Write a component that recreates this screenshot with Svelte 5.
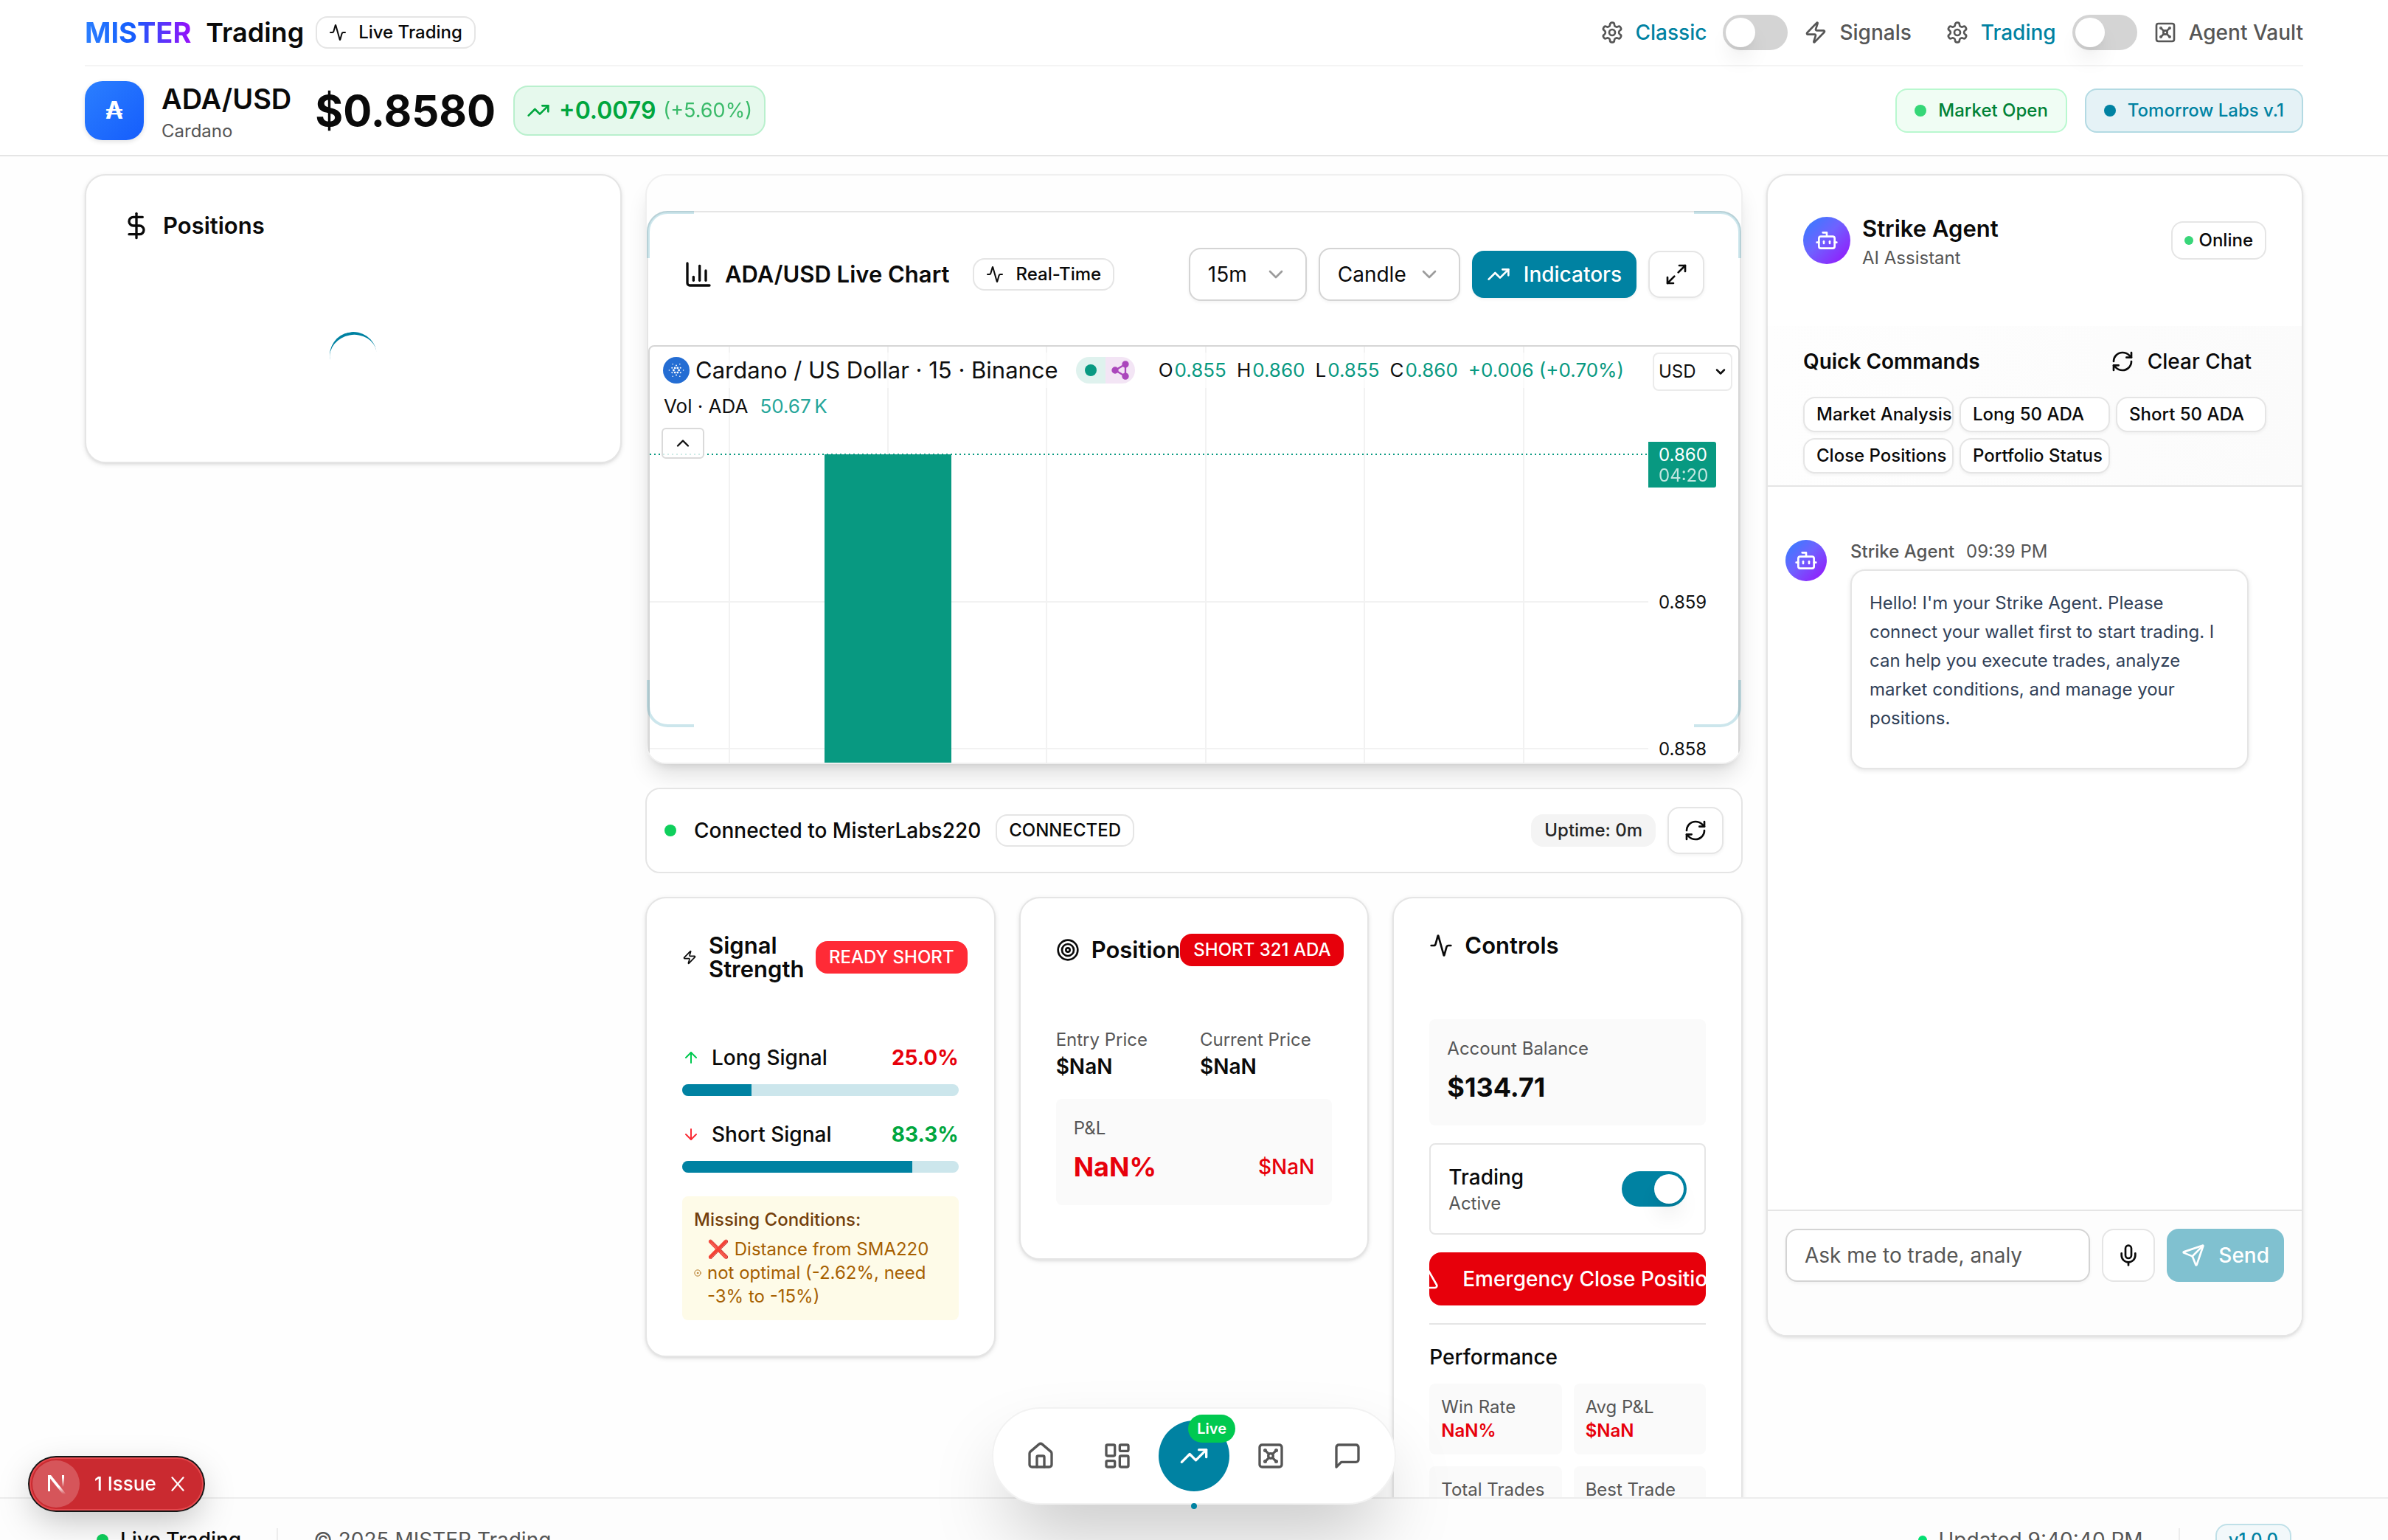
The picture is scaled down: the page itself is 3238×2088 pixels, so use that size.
<script>
  const icons = {
    activity: '<path d="M22 12h-2.48a2 2 0 0 0-1.93 1.46l-2.35 8.36a.25.25 0 0 1-.48 0L9.24 2.18a.25.25 0 0 0-.48 0l-2.35 8.36A2 2 0 0 1 4.49 12H2"/>',
    settings: '<path d="M12.22 2h-.44a2 2 0 0 0-2 2v.18a2 2 0 0 1-1 1.73l-.43.25a2 2 0 0 1-2 0l-.15-.08a2 2 0 0 0-2.73.73l-.22.38a2 2 0 0 0 .73 2.73l.15.1a2 2 0 0 1 1 1.72v.51a2 2 0 0 1-1 1.74l-.15.09a2 2 0 0 0-.73 2.73l.22.38a2 2 0 0 0 2.73.73l.15-.08a2 2 0 0 1 2 0l.43.25a2 2 0 0 1 1 1.73V20a2 2 0 0 0 2 2h.44a2 2 0 0 0 2-2v-.18a2 2 0 0 1 1-1.73l.43-.25a2 2 0 0 1 2 0l.15.08a2 2 0 0 0 2.73-.73l.22-.39a2 2 0 0 0-.73-2.73l-.15-.08a2 2 0 0 1-1-1.74v-.5a2 2 0 0 1 1-1.74l.15-.09a2 2 0 0 0 .73-2.73l-.22-.38a2 2 0 0 0-2.73-.73l-.15.08a2 2 0 0 1-2 0l-.43-.25a2 2 0 0 1-1-1.73V4a2 2 0 0 0-2-2z"/><circle cx="12" cy="12" r="3"/>',
    zap: '<path d="M4 14a1 1 0 0 1-.78-1.63l9.9-10.2a.5.5 0 0 1 .86.46l-1.92 6.02A1 1 0 0 0 13 10h7a1 1 0 0 1 .78 1.63l-9.9 10.2a.5.5 0 0 1-.86-.46l1.92-6.02A1 1 0 0 0 11 14z"/>',
    vault: '<rect width="18" height="18" x="3" y="3" rx="2"/><circle cx="7.5" cy="7.5" r=".5" fill="currentColor"/><path d="m7.9 7.9 2.7 2.7"/><circle cx="16.5" cy="7.5" r=".5" fill="currentColor"/><path d="m13.4 10.6 2.7-2.7"/><circle cx="7.5" cy="16.5" r=".5" fill="currentColor"/><path d="m7.9 16.1 2.7-2.7"/><circle cx="16.5" cy="16.5" r=".5" fill="currentColor"/><path d="m13.4 13.4 2.7 2.7"/><circle cx="12" cy="12" r="2"/>',
    trend: '<path d="M16 7h6v6"/><path d="m22 7-8.5 8.5-5-5L2 17"/>',
    dollar: '<path d="M12 2v20"/><path d="M17 5H9.5a3.5 3.5 0 0 0 0 7h5a3.5 3.5 0 0 1 0 7H6"/>',
    chart: '<path d="M3 3v16a2 2 0 0 0 2 2h16"/><path d="M18 17V9"/><path d="M13 17V5"/><path d="M8 17v-3"/>',
    down: '<path d="m6 9 6 6 6-6"/>',
    up: '<path d="m6 15 6-6 6 6"/>',
    expand: '<path d="M15 3h6v6"/><path d="m21 3-7 7"/><path d="m3 21 7-7"/><path d="M9 21H3v-6"/>',
    refresh: '<path d="M3 12a9 9 0 0 1 9-9 9.75 9.75 0 0 1 6.74 2.74L21 8"/><path d="M21 3v5h-5"/><path d="M21 12a9 9 0 0 1-9 9 9.75 9.75 0 0 1-6.74-2.74L3 16"/><path d="M8 16H3v5"/>',
    arrowUp: '<path d="m5 12 7-7 7 7"/><path d="M12 19V5"/>',
    arrowDown: '<path d="M12 5v14"/><path d="m19 12-7 7-7-7"/>',
    target: '<circle cx="12" cy="12" r="10"/><circle cx="12" cy="12" r="6"/><circle cx="12" cy="12" r="2"/>',
    ring: '<circle cx="12" cy="12" r="10"/><circle cx="12" cy="12" r="2"/>',
    alert: '<path d="m21.73 18-8-14a2 2 0 0 0-3.48 0l-8 14A2 2 0 0 0 4 21h16a2 2 0 0 0 1.73-3"/><path d="M12 9v4"/><path d="M12 17h.01"/>',
    bot: '<path d="M12 8V4H8"/><rect width="16" height="12" x="4" y="8" rx="2"/><path d="M2 14h2"/><path d="M20 14h2"/><path d="M15 13v2"/><path d="M9 13v2"/>',
    mic: '<path d="M12 19v3"/><path d="M19 10v2a7 7 0 0 1-14 0v-2"/><rect x="9" y="2" width="6" height="13" rx="3"/>',
    send: '<path d="M14.54 21.69a.5.5 0 0 0 .94-.03l6.5-19a.5.5 0 0 0-.64-.63l-19 6.5a.5.5 0 0 0-.02.94l7.93 3.18a2 2 0 0 1 1.11 1.11z"/><path d="m21.85 2.15-10.94 10.94"/>',
    home: '<path d="M15 21v-8a1 1 0 0 0-1-1h-4a1 1 0 0 0-1 1v8"/><path d="M3 10a2 2 0 0 1 .71-1.53l7-6a2 2 0 0 1 2.58 0l7 6A2 2 0 0 1 21 10v9a2 2 0 0 1-2 2H5a2 2 0 0 1-2-2z"/>',
    grid: '<rect width="7" height="9" x="3" y="3" rx="1"/><rect width="7" height="5" x="14" y="3" rx="1"/><rect width="7" height="9" x="14" y="12" rx="1"/><rect width="7" height="5" x="3" y="16" rx="1"/>',
    message: '<path d="M21 15a2 2 0 0 1-2 2H7l-4 4V5a2 2 0 0 1 2-2h14a2 2 0 0 1 2 2z"/>',
    close: '<path d="M5 4l14 16"/><path d="M19 4L5 20"/>',
    share: '<path d="M6 12 18 5v14z" fill="none"/><circle cx="6" cy="12" r="3" fill="currentColor"/><circle cx="18" cy="5" r="3" fill="currentColor"/><circle cx="18" cy="19" r="3" fill="currentColor"/>'
  };

  const commands = ['Market Analysis', 'Long 50 ADA', 'Short 50 ADA', 'Close Positions', 'Portfolio Status'];
  const signals = [
    { name: 'Long Signal', icon: 'arrowUp', iconTone: 'lime', value: 25.0, tone: 'red' },
    { name: 'Short Signal', icon: 'arrowDown', iconTone: 'rose', value: 83.3, tone: 'green' }
  ];
  const stats = [
    { label: 'Win Rate', value: 'NaN%' },
    { label: 'Avg P&L', value: '$NaN' },
    { label: 'Total Trades', value: '0' },
    { label: 'Best Trade', value: '$NaN' }
  ];
  const ohlc = [['O', '0.855'], ['H', '0.860'], ['L', '0.855'], ['C', '0.860']];
  const gridX = [108, 323, 538, 754, 969, 1185];
  const gridY = [346, 545];
  const ringDots = [0, 60, 120, 180, 240, 300].map((a) => (a * Math.PI) / 180);
  const year = 2025;
</script>

{#snippet icon(name, size)}
  <svg class="icon" width={size} height={size} viewBox="0 0 24 24" aria-hidden="true">{@html icons[name]}</svg>
{/snippet}

<div class="page">
  <header class="top">
    <div class="wrap">
      <div class="bar">
        <div class="brand">
          <span class="mister">MISTER</span>
          <span class="word">Trading</span>
          <span class="badge">{@render icon('activity', 24)}Live Trading</span>
        </div>
        <div class="modes">
          <label class="mode" for="mode-signals">{@render icon('settings', 32)}<b>Classic</b></label>
          <input id="mode-signals" class="switch" type="checkbox" role="switch" />
          <label class="mode" for="mode-signals">{@render icon('zap', 32)}Signals</label>
          <label class="mode second" for="mode-vault">{@render icon('settings', 32)}<b>Trading</b></label>
          <input id="mode-vault" class="switch" type="checkbox" role="switch" />
          <label class="mode" for="mode-vault">{@render icon('vault', 32)}Agent Vault</label>
        </div>
      </div>
      <div class="ticker">
        <div class="coin">₳</div>
        <div class="pair">
          <h1>ADA/USD</h1>
          <p>Cardano</p>
        </div>
        <div class="price">$0.8580</div>
        <div class="change">{@render icon('trend', 32)}<strong>+0.0079</strong><span>(+5.60%)</span></div>
        <div class="states">
          <span class="state open"><i></i>Market Open</span>
          <span class="state labs"><i></i>Tomorrow Labs v.1</span>
        </div>
      </div>
    </div>
  </header>

  <main>
    <div class="wrap columns">
      <section class="card positions">
        <h2>{@render icon('dollar', 40)}Positions</h2>
        <div class="loading"><div class="spinner"></div></div>
      </section>

      <div class="center">
        <section class="chart-shell">
          <div class="chart-card">
            <div class="chart-head">
              <h2>{@render icon('chart', 40)}ADA/USD Live Chart</h2>
              <span class="badge">{@render icon('activity', 24)}Real-Time</span>
              <div class="tools">
                <div class="pick short">
                  <select aria-label="Interval"><option>15m</option></select>
                  {@render icon('down', 32)}
                </div>
                <div class="pick">
                  <select aria-label="Chart type"><option>Candles</option></select>
                  {@render icon('down', 32)}
                </div>
                <button class="btn primary">{@render icon('trend', 32)}Indicators</button>
                <button class="btn" aria-label="Fullscreen">{@render icon('expand', 32)}</button>
              </div>
            </div>
            <div class="plot">
              <svg class="canvas" aria-hidden="true">
                {#each gridX as x}<line x1={x} x2={x} y1="0" y2="564" />{/each}
                {#each gridY as y}<line x1="0" x2="100%" y1={y} y2={y} />{/each}
                <rect x="237" y="146" width="172" height="420" fill="#089981" />
                <line class="last" x1="0" x2="100%" y1="146" y2="146" />
              </svg>
              <svg class="axis">
                <text x="14" y="355">0.859</text>
                <text x="14" y="554">0.858</text>
                <path d="M0 129h89a3 3 0 0 1 3 3v56a3 3 0 0 1-3 3H0z" fill="#089981" />
                <text class="now" x="14" y="155">0.860</text>
                <text class="now count" x="14" y="183">04:20</text>
              </svg>
              <div class="legend">
                <div class="symbol">
                  <svg class="ada" width="36" height="36" viewBox="0 0 36 36" aria-hidden="true">
                    <circle cx="18" cy="18" r="18" fill="#246dd3" />
                    <g fill="#fff">
                      {#each ringDots as a}
                        <circle cx={18 + 3.6 * Math.cos(a)} cy={18 + 3.6 * Math.sin(a)} r="1.4" />
                        <circle cx={18 + 6.6 * Math.cos(a + 0.52)} cy={18 + 6.6 * Math.sin(a + 0.52)} r="1" />
                        <circle cx={18 + 9.6 * Math.cos(a)} cy={18 + 9.6 * Math.sin(a)} r="0.8" />
                      {/each}
                    </g>
                  </svg>
                  <span class="name">Cardano / US Dollar · 15 · Binance</span>
                  <span class="pill"><span class="live"><i></i></span><span class="net">{@render icon('share', 28)}</span></span>
                  <span class="ohlc">
                    {#each ohlc as [k, v]}<span>{k}<em>{v}</em></span>{/each}
                    <em>+0.006 (+0.70%)</em>
                  </span>
                </div>
                <div class="volume">Vol · ADA <em>50.67&#8201;K</em></div>
                <button class="fold" aria-label="Hide legend">{@render icon('up', 28)}</button>
              </div>
              <div class="currency">
                <select aria-label="Currency"><option>USD</option></select>
                {@render icon('down', 20)}
              </div>
            </div>
            <div class="corners"><i class="tl"></i><i class="tr"></i><i class="bl"></i><i class="br"></i></div>
          </div>
        </section>

        <section class="status">
          <i class="dot"></i>
          <span class="host">Connected to MisterLabs220</span>
          <span class="badge">CONNECTED</span>
          <span class="badge soft">Uptime: 0m</span>
          <button class="btn" aria-label="Refresh">{@render icon('refresh', 32)}</button>
        </section>

        <div class="trio">
          <section class="card">
            <div class="card-head">
              <h2 class="narrow">{@render icon('zap', 20)}Signal Strength</h2>
              <span class="badge hot">READY SHORT</span>
            </div>
            {#each signals as s}
              <div class="signal">
                <div class="signal-row">
                  <span class="what"><span class={s.iconTone}>{@render icon(s.icon, 24)}</span>{s.name}</span>
                  <strong class={s.tone}>{s.value.toFixed(1)}%</strong>
                </div>
                <div class="meter"><div class="fill" style="width: {s.value}%"></div></div>
              </div>
            {/each}
            <div class="missing">
              <h3>Missing Conditions:</h3>
              <div class="reason">
                {@render icon('ring', 10)}
                <p><span class="cross">❌</span> Distance from SMA220 not optimal (-2.62%, need -3% to -15%)</p>
              </div>
            </div>
          </section>

          <section class="card">
            <div class="card-head">
              <h2>{@render icon('target', 32)}Position</h2>
              <span class="badge danger">SHORT 321 ADA</span>
            </div>
            <div class="pairs">
              <div><p class="label">Entry Price</p><p class="value">$NaN</p></div>
              <div><p class="label">Current Price</p><p class="value">$NaN</p></div>
            </div>
            <div class="box pnl">
              <p class="label">P&amp;L</p>
              <div class="pnl-row"><strong>NaN%</strong><span>$NaN</span></div>
            </div>
          </section>

          <section class="card">
            <div class="card-head">
              <h2>{@render icon('activity', 32)}Controls</h2>
            </div>
            <div class="controls">
              <div class="box">
                <p class="label">Account Balance</p>
                <p class="balance">$134.71</p>
              </div>
              <div class="toggle">
                <label for="trading">Trading<span>Active</span></label>
                <input id="trading" class="switch" type="checkbox" role="switch" checked />
              </div>
              <button class="emergency">{@render icon('alert', 32)}Emergency Close Position</button>
              <hr />
            </div>
            <h3 class="perf">Performance</h3>
            <div class="stats">
              {#each stats as s}
                <div class="stat"><p class="label">{s.label}</p><p class="bad">{s.value}</p></div>
              {/each}
            </div>
          </section>
        </div>
      </div>

      <section class="card agent">
        <div class="agent-head">
          <div class="avatar big">{@render icon('bot', 32)}</div>
          <div>
            <h2>Strike Agent</h2>
            <p class="label">AI Assistant</p>
          </div>
          <span class="badge online"><i></i>Online</span>
        </div>
        <div class="quick">
          <div class="quick-head">
            <h3>Quick Commands</h3>
            <button class="clear">{@render icon('refresh', 32)}Clear Chat</button>
          </div>
          <div class="commands">
            {#each commands as c}<button>{c}</button>{/each}
          </div>
        </div>
        <div class="log">
          <div class="avatar">{@render icon('bot', 32)}</div>
          <div class="message">
            <p class="who"><b>Strike Agent</b><time>09:39 PM</time></p>
            <p class="bubble">Hello! I'm your Strike Agent. Please connect your wallet first to start trading. I can help you execute trades, analyze market conditions, and manage your positions.</p>
          </div>
        </div>
        <form class="compose">
          <input type="text" aria-label="Message" placeholder="Ask me to trade, analy" />
          <button type="button" class="voice" aria-label="Voice input">{@render icon('mic', 32)}</button>
          <button type="button" class="send">{@render icon('send', 32)}Send</button>
        </form>
      </section>
    </div>
  </main>

  <footer>
    <div class="wrap foot">
      <i class="dot"></i>
      <span class="strong">Live Trading</span>
      <span class="rule"></span>
      <span>© {year} MISTER Trading</span>
      <i class="dot small"></i>
      <span>Updated 9:40:40 PM</span>
      <span class="rule"></span>
      <span class="badge version">v1.0.0</span>
    </div>
  </footer>

  <nav class="dock" aria-label="Main">
    <a href="#home" aria-label="Home">{@render icon('home', 40)}</a>
    <a href="#dashboard" aria-label="Dashboard">{@render icon('grid', 40)}</a>
    <a href="#trading" class="active" aria-label="Trading">{@render icon('trend', 40)}<span class="tag">Live</span><i></i></a>
    <a href="#vault" aria-label="Agent Vault">{@render icon('vault', 40)}</a>
    <a href="#chat" aria-label="Chat">{@render icon('message', 40)}</a>
  </nav>

  <div class="issue">
    <span class="mark">
      <svg width="28" height="28" viewBox="0 0 28 28" aria-hidden="true">
        <defs>
          <linearGradient id="fade-leg" gradientUnits="userSpaceOnUse" x1="0" y1="18" x2="0" y2="28"><stop offset="0" stop-color="#fff" /><stop offset="1" stop-color="#fff" stop-opacity="0" /></linearGradient>
          <linearGradient id="fade-stem" x1="0" y1="0" x2="0" y2="1"><stop offset="0.2" stop-color="#fff" /><stop offset="1" stop-color="#fff" stop-opacity="0" /></linearGradient>
        </defs>
        <rect x="3" y="2" width="3" height="22" fill="#fff" />
        <path d="M3 2h4l20 25-3 2L3 3z" fill="url(#fade-leg)" />
        <rect x="22" y="2" width="3" height="16" fill="url(#fade-stem)" />
      </svg>
    </span>
    <button class="open-issue">1 Issue</button>
    <button aria-label="Dismiss">{@render icon('close', 26)}</button>
  </div>
</div>

<style>
  :global(body) {
    margin: 0;
    background: #fefefe;
  }
  .page {
    --teal: #0082a2;
    --line: #e5e5e5;
    --ink: #0a0a0a;
    --muted: #565656;
    height: 100vh;
    display: flex;
    flex-direction: column;
    overflow: hidden;
    font: 400 28px/40px Inter, "Open Sans", sans-serif;
    color: var(--ink);
  }
  .page :where(*) {
    box-sizing: border-box;
  }
  h1, h2, h3, p {
    margin: 0;
  }
  button, select, input {
    font: inherit;
    color: inherit;
    margin: 0;
  }
  em, i {
    font-style: normal;
  }
  .icon {
    flex: none;
    display: block;
    fill: none;
    stroke: currentColor;
    stroke-width: 2;
    stroke-linecap: round;
    stroke-linejoin: round;
  }
  .wrap {
    width: 100%;
    max-width: 3072px;
    margin: 0 auto;
    padding: 0 32px;
  }
  .badge {
    display: inline-flex;
    align-items: center;
    gap: 16px;
    height: 44px;
    flex: none;
    padding: 0 16px;
    border: 2px solid var(--line);
    border-radius: 16px;
    font-size: 24px;
    font-weight: 500;
    line-height: 32px;
    white-space: nowrap;
    background: #fff;
  }
  .label {
    font-size: 24px;
    line-height: 32px;
    color: var(--muted);
  }

  /* header */
  .top {
    flex: none;
    background: #fff;
    border-bottom: 2px solid var(--line);
  }
  .bar {
    display: flex;
    align-items: center;
    justify-content: space-between;
    height: 90px;
    border-bottom: 2px solid #f4f4f4;
  }
  .brand {
    display: flex;
    align-items: center;
    gap: 16px;
    font-size: 36px;
  }
  .mister {
    font-size: 38px;
    font-weight: 700;
    margin-right: 4px;
    background: linear-gradient(90deg, #2b7fff, #155dfc 45%, #9810fa);
    background-clip: text;
    color: transparent;
  }
  .word {
    font-size: 36px;
    font-weight: 600;
  }
  .modes {
    display: flex;
    align-items: center;
    gap: 22px;
  }
  .mode {
    display: flex;
    align-items: center;
    gap: 16px;
    font-weight: 500;
    color: var(--muted);
  }
  .mode b {
    font-weight: 500;
    color: var(--teal);
  }
  .mode.second {
    margin-left: 24px;
  }
  .switch {
    appearance: none;
    flex: none;
    width: 88px;
    height: 48px;
    padding: 4px;
    border-radius: 24px;
    background: #d4d4d4;
  }
  .switch::before {
    content: "";
    display: block;
    width: 40px;
    height: 40px;
    border-radius: 50%;
    background: #fff;
    box-shadow: 0 20px 30px -6px rgba(0, 0, 0, 0.1), 0 8px 12px -8px rgba(0, 0, 0, 0.1);
  }
  .switch:checked {
    background: var(--teal);
  }
  .switch:checked::before {
    margin-left: auto;
  }
  .ticker {
    display: flex;
    align-items: center;
    height: 120px;
  }
  .coin {
    width: 80px;
    height: 80px;
    border-radius: 24px;
    display: grid;
    place-items: center;
    background: linear-gradient(135deg, #2b7fff, #155dfc);
    color: #fff;
    font-size: 32px;
    font-weight: 700;
    box-shadow: 0 2px 6px rgba(0, 0, 0, 0.12);
  }
  .pair {
    margin-left: 24px;
  }
  .pair h1 {
    font-size: 38px;
    font-weight: 600;
    line-height: 56px;
  }
  .pair p {
    font-size: 24px;
    line-height: 32px;
    color: var(--muted);
  }
  .price {
    margin-left: 32px;
    font-size: 58px;
    font-weight: 700;
    line-height: 72px;
  }
  .change {
    display: flex;
    align-items: center;
    margin-left: 24px;
    height: 68px;
    padding: 0 16px;
    border: 2px solid #b9f0cd;
    border-radius: 20px;
    background: #e6f9ed;
    color: #00a63e;
  }
  .change strong {
    margin: 0 10px 0 12px;
    font-size: 32px;
    font-weight: 600;
  }
  .change span {
    font-size: 27px;
    opacity: 0.75;
  }
  .states {
    display: flex;
    gap: 24px;
    margin-left: auto;
  }
  .state {
    display: flex;
    align-items: center;
    gap: 16px;
    height: 60px;
    padding: 0 24px;
    border: 2px solid #b9f8cf;
    border-radius: 16px;
    background: #f0fdf4;
    color: #008236;
    font-size: 24px;
    font-weight: 500;
  }
  .state i {
    width: 16px;
    height: 16px;
    border-radius: 50%;
    background: #35d777;
  }
  .state.labs {
    border-color: #b3dae3;
    background: #e5f2f6;
    color: var(--teal);
  }
  .state.labs i {
    background: var(--teal);
  }

  /* layout */
  main {
    flex: 1;
    min-height: 0;
    overflow: hidden;
    padding-top: 24px;
  }
  .columns {
    display: grid;
    grid-template-columns: repeat(12, minmax(0, 1fr));
    gap: 32px;
    align-items: start;
  }
  .card {
    border: 2px solid var(--line);
    border-radius: 28px;
    background: #fff;
    padding: 48px;
    box-shadow: 0 2px 6px rgba(0, 0, 0, 0.1), 0 2px 4px -2px rgba(0, 0, 0, 0.1);
  }
  h2 {
    display: flex;
    align-items: center;
    gap: 16px;
    font-size: 31px;
    font-weight: 600;
    line-height: 32px;
  }
  .positions {
    grid-column: span 3;
  }
  .loading {
    display: flex;
    justify-content: center;
    padding: 124px 0 64px;
  }
  .spinner {
    width: 64px;
    height: 64px;
    border-radius: 50%;
    border-bottom: 4px solid var(--teal);
    transform: rotate(170deg);
  }
  .center {
    grid-column: span 6;
    display: flex;
    flex-direction: column;
    gap: 32px;
  }

  /* chart */
  .chart-shell {
    height: 800px;
    border: 2px solid #f0f0f0;
    border-radius: 28px;
    padding-top: 48px;
    overflow: hidden;
    background: #fefefe;
    box-shadow: 0 20px 30px -6px rgba(0, 0, 0, 0.13), 0 8px 12px -8px rgba(0, 0, 0, 0.13);
  }
  .chart-card {
    position: relative;
    border: 2px solid var(--line);
    border-radius: 28px;
    background: #fff;
  }
  .chart-head {
    display: flex;
    align-items: center;
    padding: 48px 48px 60px;
  }
  .chart-head .badge {
    margin-left: 32px;
  }
  .tools {
    display: flex;
    align-items: center;
    gap: 16px;
    margin-left: auto;
  }
  .pick {
    position: relative;
    width: 192px;
  }
  .pick.short {
    width: 160px;
  }
  .pick select {
    appearance: none;
    display: block;
    width: 100%;
    height: 72px;
    padding: 0 72px 0 24px;
    border: 2px solid #d4d4d4;
    border-radius: 16px;
    background: #fff;
    box-shadow: 0 2px 4px rgba(0, 0, 0, 0.05);
  }
  .pick :global(.icon) {
    position: absolute;
    right: 26px;
    top: 20px;
    opacity: 0.4;
    pointer-events: none;
  }
  .btn {
    display: flex;
    align-items: center;
    gap: 18px;
    height: 64px;
    padding: 0 20px;
    border: 2px solid var(--line);
    border-radius: 16px;
    background: #fff;
    font-weight: 500;
    box-shadow: 0 2px 4px rgba(0, 0, 0, 0.05);
  }
  .btn.primary {
    border: 0;
    background: var(--teal);
    color: #fff;
  }
  .plot {
    position: relative;
    display: flex;
    height: 640px;
    border: 2px solid #d6d6d6;
    border-radius: 8px;
    color: #0f0f0f;
  }
  .canvas {
    flex: 1;
    min-width: 0;
    height: 100%;
  }
  .canvas line {
    stroke: #f2f2f2;
    stroke-width: 2;
  }
  .canvas .last {
    stroke: #089981;
    stroke-dasharray: 2 4;
  }
  .axis {
    flex: none;
    width: 122px;
    height: 100%;
    font-size: 24px;
    fill: #0f0f0f;
  }
  .axis .now {
    fill: #fff;
  }
  .axis .count {
    opacity: 0.75;
  }
  .legend {
    position: absolute;
    left: 16px;
    top: 8px;
    font-size: 26px;
  }
  .legend em {
    color: #089981;
  }
  .symbol {
    display: flex;
    align-items: center;
    height: 48px;
    white-space: nowrap;
    background: rgba(255, 255, 255, 0.6);
  }
  .ada {
    margin: 0 8px 0 2px;
  }
  .name {
    font-size: 31px;
  }
  .pill {
    display: flex;
    width: 80px;
    height: 36px;
    margin: 0 32px 0 24px;
    border-radius: 18px;
    overflow: hidden;
  }
  .pill span {
    flex: 1;
    display: grid;
    place-items: center;
  }
  .live {
    background: #dff2ee;
  }
  .live i {
    width: 16px;
    height: 16px;
    border-radius: 50%;
    background: #089981;
  }
  .net {
    background: #f3e5f5;
    color: #ab47bc;
  }
  .ohlc {
    display: flex;
    gap: 14px;
  }
  .ohlc span {
    display: flex;
    gap: 2px;
  }
  .volume {
    display: flex;
    gap: 16px;
    height: 50px;
    padding-left: 3px;
    align-items: center;
  }
  .volume em {
    color: #26a69a;
  }
  .fold {
    display: grid;
    place-items: center;
    width: 58px;
    height: 42px;
    margin-top: 4px;
    padding: 0;
    border: 2px solid #dadada;
    border-radius: 6px;
    background: rgba(255, 255, 255, 0.8);
  }
  .currency {
    position: absolute;
    right: 8px;
    top: 8px;
  }
  .currency select {
    appearance: none;
    display: block;
    width: 108px;
    height: 52px;
    padding: 0 6px;
    border: 2px solid #ebebeb;
    border-radius: 8px;
    background: #fff;
    font-size: 24px;
  }
  .currency :global(.icon) {
    position: absolute;
    right: 6px;
    top: 16px;
    stroke-width: 3;
    pointer-events: none;
  }
  .corners {
    position: absolute;
    inset: -2px -2px auto;
    height: 700px;
    pointer-events: none;
  }
  .corners i {
    position: absolute;
    width: 64px;
    height: 64px;
    border: 0 solid rgba(0, 130, 162, 0.2);
  }
  .corners .tl {
    left: 0;
    top: 0;
    border-width: 4px 0 0 4px;
    border-top-left-radius: 28px;
  }
  .corners .tr {
    right: 0;
    top: 0;
    border-width: 4px 4px 0 0;
    border-top-right-radius: 28px;
  }
  .corners .bl {
    left: 0;
    bottom: 0;
    border-width: 0 0 4px 4px;
    border-bottom-left-radius: 28px;
  }
  .corners .br {
    right: 0;
    bottom: 0;
    border-width: 0 4px 4px 0;
    border-bottom-right-radius: 28px;
  }

  /* connection */
  .status {
    display: flex;
    align-items: center;
    height: 116px;
    padding: 0 24px;
    border: 2px solid var(--line);
    border-radius: 20px;
    background: #fff;
  }
  .dot {
    flex: none;
    width: 16px;
    height: 16px;
    border-radius: 50%;
    background: #0fcf5c;
  }
  .host {
    margin: 0 20px 0 24px;
    font-weight: 500;
  }
  .soft {
    margin: 0 16px 0 auto;
    border-color: #f4f4f4;
    background: #f4f4f4;
    color: #262626;
  }

  /* detail cards */
  .trio {
    display: grid;
    grid-template-columns: repeat(3, minmax(0, 1fr));
    gap: 32px;
    align-items: start;
  }
  .card-head {
    display: flex;
    align-items: center;
    margin-bottom: 84px;
  }
  .card-head h2 {
    flex: none;
  }
  .card-head .narrow {
    width: 181px;
  }
  .hot {
    border-color: #ff2b36;
    background: #ff2b36;
    color: #fff;
  }
  .danger {
    border-color: #e7000b;
    background: #e7000b;
    color: #fff;
  }
  .signal {
    margin-bottom: 32px;
  }
  .signal-row {
    display: flex;
    justify-content: space-between;
    margin-bottom: 16px;
  }
  .what {
    display: flex;
    align-items: center;
    gap: 16px;
    font-weight: 500;
  }
  .lime {
    color: #00c950;
  }
  .rose {
    color: #fb2c36;
  }
  .red {
    color: #e7000b;
  }
  .green {
    color: #00a63e;
  }
  .meter {
    height: 16px;
    border-radius: 8px;
    overflow: hidden;
    background: #cce6ec;
  }
  .fill {
    height: 100%;
    background: var(--teal);
  }
  .missing {
    padding: 16px;
    border-radius: 8px;
    background: #fefbe8;
    font-size: 24px;
    line-height: 32px;
    color: #a65f00;
  }
  .missing h3 {
    margin-bottom: 8px;
    font-size: 24px;
    font-weight: 500;
    line-height: 32px;
    color: #733e0a;
  }
  .reason {
    display: flex;
    align-items: center;
    gap: 8px;
  }
  .cross {
    color: #f20a0a;
  }
  .pairs {
    display: grid;
    grid-template-columns: 1fr 1fr;
    gap: 16px;
    margin-bottom: 24px;
  }
  .value {
    font-weight: 600;
  }
  .box {
    padding: 24px;
    border-radius: 8px;
    background: #fafafa;
  }
  .pnl {
    margin-bottom: 24px;
  }
  .pnl-row {
    display: flex;
    align-items: center;
    justify-content: space-between;
    margin-top: 8px;
    line-height: 56px;
    font-weight: 500;
    color: #e7000b;
  }
  .pnl-row strong {
    font-size: 36px;
    font-weight: 700;
  }
  .balance {
    margin-top: 8px;
    font-size: 36px;
    font-weight: 700;
    line-height: 56px;
  }
  .controls {
    display: flex;
    flex-direction: column;
    gap: 24px;
  }
  .toggle {
    display: flex;
    align-items: center;
    justify-content: space-between;
    padding: 24px;
    border: 2px solid var(--line);
    border-radius: 8px;
  }
  .toggle label {
    font-weight: 500;
  }
  .toggle span {
    display: block;
    font-size: 24px;
    font-weight: 400;
    line-height: 32px;
    color: var(--muted);
  }
  .emergency {
    display: flex;
    align-items: center;
    justify-content: center;
    gap: 32px;
    height: 72px;
    padding: 0;
    border: 0;
    border-radius: 16px;
    overflow: hidden;
    background: #e7000b;
    color: #fff;
    font-weight: 500;
    white-space: nowrap;
  }
  hr {
    width: 100%;
    height: 2px;
    margin: 0;
    border: 0;
    background: var(--line);
  }
  .perf {
    margin: 24px 0 16px;
    font-size: 28px;
    font-weight: 500;
  }
  .stats {
    display: grid;
    grid-template-columns: 1fr 1fr;
    gap: 16px;
  }
  .stat {
    padding: 16px;
    border-radius: 8px;
    background: #fafafa;
  }
  .bad {
    font-size: 24px;
    font-weight: 600;
    line-height: 32px;
    color: #e7000b;
  }

  /* agent */
  .agent {
    grid-column: span 3;
    display: flex;
    flex-direction: column;
    height: calc(100vh - 512px);
    padding: 48px 0 0;
    overflow: hidden;
  }
  .agent-head {
    display: flex;
    align-items: center;
    gap: 16px;
    height: 80px;
    padding: 0 48px;
  }
  .agent-head h2 {
    line-height: 48px;
  }
  .avatar {
    flex: none;
    display: grid;
    place-items: center;
    width: 56px;
    height: 56px;
    border-radius: 50%;
    background: linear-gradient(135deg, #2f80ff, #6f62ff 45%, #9810fa);
    color: #fff;
  }
  .avatar.big {
    width: 64px;
    height: 64px;
  }
  .online {
    height: 52px;
    margin-left: auto;
    gap: 8px;
  }
  .online i {
    width: 12px;
    height: 12px;
    border-radius: 50%;
    background: #38d679;
  }
  .quick {
    margin-top: 76px;
    padding: 16px 48px;
    border-bottom: 2px solid var(--line);
    background: linear-gradient(90deg, #fefefe, #fbfbfb);
  }
  .quick-head {
    display: flex;
    align-items: center;
    justify-content: space-between;
    height: 64px;
    margin-bottom: 16px;
  }
  .quick-head h3 {
    font-size: 28px;
    font-weight: 600;
  }
  .clear {
    display: flex;
    align-items: center;
    gap: 18px;
    padding: 0 20px;
    border: 0;
    background: none;
    font-weight: 500;
  }
  .commands {
    display: grid;
    grid-template-columns: repeat(3, minmax(0, 1fr));
    gap: 8px;
  }
  .commands button {
    height: 48px;
    padding: 0 0 0 16px;
    border: 2px solid var(--line);
    border-radius: 16px;
    background: #fff;
    font-size: 24px;
    font-weight: 500;
    line-height: 32px;
    text-align: left;
    white-space: nowrap;
    box-shadow: 0 2px 4px rgba(0, 0, 0, 0.05);
  }
  .log {
    flex: 1;
    min-height: 0;
    display: flex;
    gap: 32px;
    padding: 72px 72px 0 24px;
  }
  .message {
    flex: 1;
    font-size: 24px;
  }
  .who {
    display: flex;
    gap: 16px;
    margin-bottom: 8px;
    line-height: 32px;
    color: var(--muted);
  }
  .who b {
    font-weight: 500;
  }
  .bubble {
    padding: 24px 24px 48px;
    border: 2px solid var(--line);
    border-radius: 20px;
    background: #fff;
    line-height: 39px;
    color: #314158;
    box-shadow: 0 2px 6px rgba(0, 0, 0, 0.1);
  }
  .compose {
    display: flex;
    gap: 16px;
    padding: 24px 24px 72px;
    border-top: 2px solid var(--line);
    background: #fdfdfd;
  }
  .compose input {
    flex: 1;
    min-width: 0;
    height: 72px;
    padding: 0 24px;
    border: 2px solid #d4d4d4;
    border-radius: 16px;
    background: #fff;
    box-shadow: 0 2px 4px rgba(0, 0, 0, 0.05);
  }
  .compose input::placeholder {
    color: var(--muted);
    opacity: 1;
  }
  .voice {
    display: grid;
    place-items: center;
    width: 72px;
    height: 72px;
    padding: 0;
    border: 2px solid var(--line);
    border-radius: 16px;
    background: #fff;
  }
  .send {
    display: flex;
    align-items: center;
    gap: 18px;
    height: 72px;
    padding: 0 20px;
    border: 0;
    border-radius: 16px;
    background: #80c1d0;
    color: #fff;
    font-weight: 500;
  }

  /* footer */
  footer {
    flex: none;
    height: 58px;
    border-top: 2px solid #ededed;
    background: #fdfdfd;
    overflow: hidden;
  }
  .foot {
    display: flex;
    align-items: center;
    height: 112px;
    padding: 0 48px;
    color: var(--muted);
  }
  .foot .strong {
    margin-left: 16px;
    font-weight: 500;
    color: var(--ink);
  }
  .rule {
    width: 2px;
    height: 32px;
    margin: 0 48px;
    background: #ededed;
  }
  .small {
    width: 12px;
    height: 12px;
    margin: 0 16px 0 auto;
    background: #05df72;
  }
  .version {
    border-color: #bfe0e8;
    background: #f2f8fa;
    color: var(--teal);
  }

  /* floating */
  .dock {
    position: fixed;
    left: 50%;
    bottom: 48px;
    transform: translateX(-50%);
    display: flex;
    gap: 8px;
    padding: 16px;
    border: 2px solid #f2f2f2;
    border-radius: 66px;
    background: #fff;
    box-shadow: 0 50px 100px -20px rgba(0, 0, 0, 0.25);
  }
  .dock a {
    position: relative;
    display: grid;
    place-items: center;
    width: 96px;
    height: 96px;
    border-radius: 50%;
    color: #555;
  }
  .dock .active {
    background: var(--teal);
    color: #fff;
  }
  .tag {
    position: absolute;
    top: -8px;
    right: -8px;
    padding: 3px 12px;
    border-radius: 19px;
    background: #00c950;
    font-size: 20px;
    font-weight: 600;
    line-height: 32px;
  }
  .active i {
    position: absolute;
    left: 44px;
    bottom: -24px;
    width: 8px;
    height: 8px;
    border-radius: 50%;
    background: var(--teal);
  }
  .issue {
    position: fixed;
    left: 40px;
    bottom: 40px;
    display: flex;
    align-items: center;
    width: 236px;
    height: 72px;
    padding: 0 2px;
    border: 2px solid #e5484d;
    border-radius: 38px;
    background: #ca2a30;
    color: #fff;
    box-shadow: 0 0 0 2px #171717, 0 16px 48px -4px rgba(0, 0, 0, 0.25);
  }
  .mark {
    display: grid;
    place-items: center;
    width: 64px;
    height: 64px;
    border-radius: 50%;
    background: #d6555a;
  }
  .issue button {
    padding: 0;
    border: 0;
    background: none;
    color: #fff;
    font-size: 26px;
    font-weight: 500;
    white-space: nowrap;
  }
  .issue .open-issue {
    margin: 0 16px 0 20px;
  }
</style>
